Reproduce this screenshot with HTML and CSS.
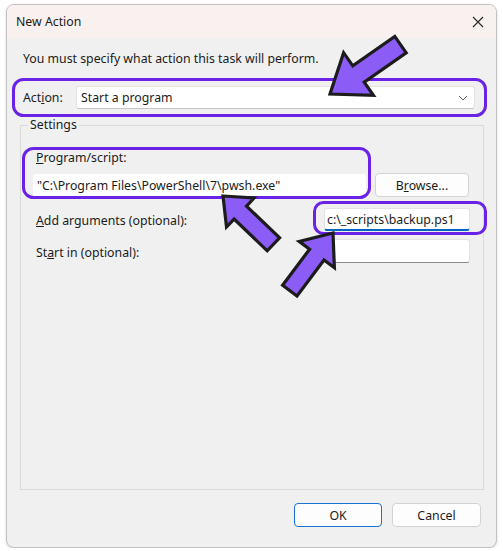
FILE: index.html
```html
<!DOCTYPE html>
<html lang="en">
<head>
  <meta charset="UTF-8" />
  <title>New Action</title>
  <link rel="stylesheet" href="styles.css">
</head>
<body>
  <div class="window">
    <div class="titlebar">
      <span class="title">New Action</span>
      <svg class="close" width="12" height="12" viewBox="0 0 12 12">
        <path d="M1 1 L11 11 M11 1 L1 11" stroke="#2b2b2b" stroke-width="1.2" fill="none"/>
      </svg>
    </div>
    <div class="content">
      <p class="intro">You must specify what action this task will perform.</p>
      <div class="action-row">
        <span class="label">Act<u>i</u>on:</span>
        <div class="combo">
          <span>Start a program</span>
          <svg width="10" height="6" viewBox="0 0 10 6">
            <path d="M1 1 L5 5 L9 1" stroke="#606060" stroke-width="1" fill="none"/>
          </svg>
        </div>
      </div>
      <fieldset class="settings">
        <legend>Settings</legend>
        <div class="label prog-label"><u>P</u>rogram/script:</div>
        <div class="prog-row">
          <div class="input prog-input">"C:\Program Files\PowerShell\7\pwsh.exe"</div>
          <button class="btn browse">B<u>r</u>owse...</button>
        </div>
        <div class="field-row args-row">
          <span class="label"><u>A</u>dd arguments (optional):</span>
          <div class="input focused">c:\_scripts\backup.ps1</div>
        </div>
        <div class="field-row start-row">
          <span class="label">St<u>a</u>rt in (optional):</span>
          <div class="input"></div>
        </div>
      </fieldset>
      <div class="buttons">
        <button class="btn default">OK</button>
        <button class="btn">Cancel</button>
      </div>
    </div>
  </div>

  <!-- annotations drawn on top of the screenshot -->
  <svg class="marks" width="503" height="551" viewBox="0 0 503 551">
    <g fill="none" stroke="#6a22e6" stroke-width="3">
      <rect x="13.5" y="79.5" width="472" height="36" rx="10"/>
      <rect x="23.5" y="148.5" width="346" height="49" rx="10"/>
      <rect x="314.5" y="202.5" width="171" height="31" rx="9"/>
    </g>
    <g fill="#8b5cf6" stroke="#1c1c1c" stroke-width="3.2" stroke-linejoin="miter">
      <polygon points="330,94 343.6,52.7 352.8,65.8 394.8,36.4 406.2,52.8 364.2,82.2 373.4,95.3"/>
      <polygon points="223,196 254,198 246.5,206.1 279.6,237.8 267.2,250.8 234.1,219.1 226.5,227"/>
      <polygon points="333,233 334.4,267.8 324,260 297,296 282.6,285.2 309.6,249.2 299.2,241.4"/>
    </g>
  </svg>
</body>
</html>
```

FILE: styles.css
```css
body {
  margin: 0;
  background: #ffffff;
  font-family: "Noto Sans", "Liberation Sans", sans-serif;
  font-size: 12.3px;
  color: #1b1b1b;
}
.window {
  box-sizing: border-box;
  margin: 4px 0 0 6px;
  width: 491px;
  height: 544px;
  border: 1px solid #c2c2c2;
  border-radius: 8px;
  background: #f0f0f0;
  overflow: hidden;
  box-shadow: 0 1px 3px rgba(0,0,0,0.15);
}
.titlebar {
  height: 33px;
  background: #f9f1ef;
  display: flex;
  align-items: center;
  justify-content: space-between;
  padding: 0 9px 0 9px;
}
.title {
  margin-top: -1px;
}
.close {
  margin-right: 3px;
}
.content {
  padding: 13px 15px 0 16px;
}
.intro {
  margin: 0;
  line-height: 16px;
}
.label {
  line-height: 16px;
}
.action-row {
  display: flex;
  align-items: center;
  margin-top: 19px;
}
.action-row .label {
  width: 53px;
}
.combo {
  box-sizing: border-box;
  width: 399px;
  height: 23px;
  background: #ffffff;
  border: 1px solid #e2e2e2;
  border-bottom-color: #c4c4c4;
  border-radius: 3px;
  display: flex;
  align-items: center;
  justify-content: space-between;
  padding: 0 6px 0 4px;
}
.settings {
  margin: 8px 0 0 -3px;
  height: 373px;
  box-sizing: border-box;
  border: 1px solid #dadada;
  padding: 17px 14px 0 12px;
}
.settings legend {
  line-height: 16px;
  padding: 0 2px;
  margin-left: -5px;
}
.prog-label {
  margin-left: 3px;
}
.prog-row {
  display: flex;
  align-items: center;
  margin-top: 7px;
  gap: 9px;
}
.input {
  box-sizing: border-box;
  height: 23px;
  background: #ffffff;
  border: 1px solid #e3e3e3;
  border-bottom-color: #8c8c8c;
  border-radius: 3px;
  padding: 0 3px;
  line-height: 21px;
  white-space: nowrap;
  overflow: hidden;
}
.prog-input {
  width: 333px;
  border-color: #ffffff;
}
.btn {
  box-sizing: border-box;
  height: 24px;
  background: #fdfdfd;
  border: 1px solid #d3d3d3;
  border-radius: 4px;
  font-family: inherit;
  font-size: 12.3px;
  color: #1b1b1b;
  padding: 0;
}
.browse {
  width: 94px;
}
.field-row {
  display: flex;
  align-items: center;
  justify-content: space-between;
}
.field-row .label {
  margin-left: 3px;
  padding-top: 3px;
}
.field-row .input {
  width: 146px;
  margin-right: -1px;
}
.args-row {
  margin-top: 11px;
}
.start-row {
  margin-top: 8px;
}
.start-row .input {
  height: 24px;
}
.focused {
  border-bottom: 2px solid #0067c0;
  padding-left: 2px;
}
.buttons {
  display: flex;
  justify-content: flex-end;
  gap: 10px;
  margin-top: 13px;
}
.buttons .btn {
  width: 89px;
}
.buttons .default {
  width: 88px;
  border-color: #1a73d0;
}
.marks {
  position: absolute;
  left: 0;
  top: 0;
  pointer-events: none;
}
```
